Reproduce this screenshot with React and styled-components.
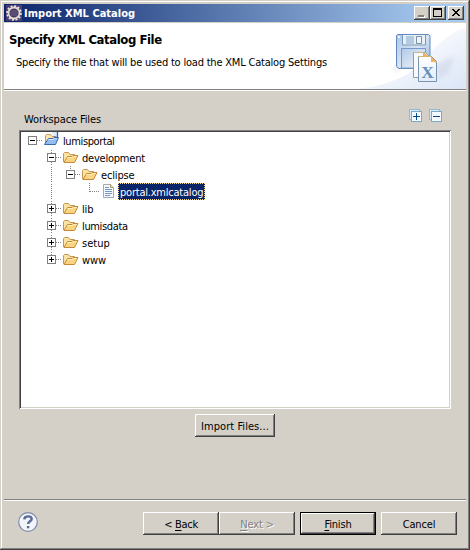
import React from "react";
import styled, { createGlobalStyle, css } from "styled-components";

const face = "#d4d0c8";

const GlobalStyle = createGlobalStyle`
  * { box-sizing: border-box; }
  body { margin: 0; background: ${face}; overflow: hidden; }
`;

const Window = styled.div`
  width: 470px;
  height: 550px;
  display: flex;
  flex-direction: column;
  padding: 4px;
  background: ${face};
  box-shadow: inset -1px -1px #404040, inset 1px 1px ${face}, inset -2px -2px #808080, inset 2px 2px #fff;
  font: 11px/17px "DejaVu Sans Condensed", "DejaVu Sans", sans-serif;
  font-stretch: condensed;
  color: #000;
`;

const TitleBar = styled.header`
  flex: none;
  height: 18px;
  display: flex;
  align-items: center;
  padding: 0 2px;
  background: linear-gradient(90deg, #0a246a, #a6caf0 94%);
`;

const Title = styled.span`
  flex: 1;
  margin-left: 2px;
  color: #fff;
  font-weight: bold;
  letter-spacing: 0.02px;
`;

const bevel = css`
  background: ${face};
  box-shadow: inset -1px -1px #404040, inset 1px 1px #fff, inset -2px -2px #808080;
`;

const CaptionButton = styled.button`
  ${bevel}
  width: 16px;
  height: 14px;
  padding: 0;
  border: 0;
  display: block;
  margin-left: ${(p) => (p.$gap ? "2px" : 0)};
  svg { display: block; }
`;

const Banner = styled.section`
  flex: none;
  height: 67px;
  margin-top: 1px;
  display: flex;
  justify-content: space-between;
  background: #fff;
  border-bottom: 1px solid #808080;
  box-shadow: 0 1px #fff;
`;

const BannerText = styled.div`
  padding: 7px 0 0 5px;
  white-space: nowrap;
`;

const Heading = styled.h1`
  margin: 0;
  font-size: 13px;
  line-height: 20px;
  font-weight: bold;
  letter-spacing: -0.43px;
`;

const Description = styled.p`
  margin: 4px 0 0 7px;
  line-height: 17px;
  letter-spacing: -0.2px;
`;

const BannerArt = styled.svg`
  display: block;
  width: 110px;
  height: 66px;
`;

const Content = styled.main`
  flex: 1;
  display: flex;
  flex-direction: column;
  padding: 17px 15px 0;
`;

const TreeHeader = styled.div`
  height: 23px;
  display: flex;
  justify-content: space-between;
  padding: 0 9px 0 5px;
`;

const TreeLabel = styled.label`
  margin-top: 4px;
  letter-spacing: -0.12px;
`;

const ToolIcons = styled.div`
  display: flex;
  gap: 7px;
  padding-top: 2px;
`;

const Tree = styled.div`
  height: 279px;
  padding: 2px;
  background: #fff;
  box-shadow: inset 1px 1px #808080, inset -1px -1px #fff, inset 2px 2px #404040, inset -2px -2px ${face};
`;

const Row = styled.div`
  display: flex;
  height: 17px;
  padding-left: 2px;
  svg { display: block; flex: none; }
`;

const RowText = styled.span`
  height: 17px;
  line-height: 19px;
  margin-left: 1px;
  padding: 0 2px;
  white-space: nowrap;
  letter-spacing: ${(p) => p.$track ?? -0.15}px;
  ${(p) =>
    p.$selected &&
    css`
      color: #fff;
      background: #0a246a;
      outline: 1px dotted #f5db95;
      outline-offset: -1px;
    `}
`;

const Button = styled.button`
  ${bevel}
  width: ${(p) => p.$width ?? 76}px;
  height: 23px;
  padding: 1px 0 0;
  border: 0;
  font: inherit;
  color: #000;
  white-space: nowrap;
  letter-spacing: ${(p) => p.$track ?? -0.15}px;
  ${(p) =>
    p.$primary &&
    css`
      box-shadow: inset 0 0 0 1px #000, inset -2px -2px #404040, inset 2px 2px #fff, inset -3px -3px #808080;
    `}
  &:disabled {
    color: #808080;
    text-shadow: 1px 1px #fff;
  }
`;

const Mnemonic = styled.span`
  text-decoration: underline;
  text-underline-offset: 2px;
  text-decoration-thickness: 1px;
  text-decoration-skip-ink: none;
`;

const ImportRow = styled.div`
  display: flex;
  padding: 5px 0 0 176px;
`;

const Footer = styled.footer`
  flex: none;
  height: 47px;
  display: flex;
  align-items: flex-start;
  padding: 12px 9px 0 14px;
  border-top: 1px solid #808080;
  box-shadow: inset 0 1px #fff;
`;

const Buttons = styled.div`
  display: flex;
  margin-left: auto;
  gap: 5px;
`;

const NavPair = styled.div`
  display: flex;
`;

function EclipseIcon() {
  return (
    <svg width="16" height="16" viewBox="0 0 16 16">
      <rect width="16" height="16" fill="#4d3d75" />
      <circle cx="8" cy="8" r="6.900" fill="none" stroke="#e8e4dc" strokeWidth="1.800" strokeDasharray="2 1.600" />
      <circle cx="8" cy="8" r="5.500" fill="#45365f" stroke="#dedad3" strokeWidth="1.800" />
      <path d="M4 8h8M5 6h6M5 10h6" stroke="#73678f" strokeWidth=".9" />
    </svg>
  );
}

function SaveCatalogArt() {
  return (
    <BannerArt viewBox="356 23 110 66">
      <defs>
        <linearGradient id="sweep" x1="0" y1="0" x2="1" y2="1">
          <stop offset=".25" stopColor="#fff" />
          <stop offset="1" stopColor="#dbe5f7" />
        </linearGradient>
        <linearGradient id="disk" x1="0" y1="0" x2="1" y2="1">
          <stop offset="0" stopColor="#a9c6e6" />
          <stop offset=".5" stopColor="#d5e5f5" />
          <stop offset="1" stopColor="#92add8" />
        </linearGradient>
        <linearGradient id="label" x1="0" y1="0" x2="1" y2="1">
          <stop offset="0" stopColor="#b2c9e7" />
          <stop offset="1" stopColor="#f4f8fd" />
        </linearGradient>
        <linearGradient id="sheet" x1="0" y1="0" x2="0" y2="1">
          <stop offset="0" stopColor="#fff" />
          <stop offset="1" stopColor="#e2ebf7" />
        </linearGradient>
        <filter id="soft"><feGaussianBlur stdDeviation="2" /></filter>
      </defs>
      <path d="M356 89Q405 84 426 58T466 28V89Z" fill="url(#sweep)" />
      <path d="M436 65l18-9-5 17-12 8ZM391 70l8-5v6Z" fill="#cbd0e5" opacity=".5" filter="url(#soft)" />
      <path d="M397.500 34.500h31l1.500 1.500v32.500H399l-2.500-2V35.500Z" fill="url(#disk)" stroke="#6388bd" />
      <path d="M402.500 35v10h23V35" fill="#e7eff7" stroke="#7b9abb" />
      <path d="M406 36h8v8h-8z" fill="#b4cae0" />
      <path d="M416.500 36.500h5v7h-5z" fill="#f1f5fa" stroke="#7992a3" />
      <path d="M401.500 68V48.500h24V68Z" fill="url(#label)" stroke="#7798c8" />
      <path d="M398 36h2v2h-2z" fill="#eef5fb" />
      <path d="M413.500 52.500h12l5 5v20h-17Z" fill="#f8faff" stroke="#8ba591" />
      <path d="M418.500 56.500h13l5 5v20h-18Z" fill="url(#sheet)" stroke="#7893ae" />
      <path d="M413 52.500h10l5 4M418 56.500h13" stroke="#c5b98c" fill="none" />
      <path d="M423 52l6 5h-6ZM431 56l6 7q-5-2-6-1Z" fill="#f5ad53" />
      <text x="427.500" y="77.500" textAnchor="middle" fontFamily="Liberation Serif, serif" fontWeight="bold" fontSize="17.500" fill="#658fbd">X</text>
    </BannerArt>
  );
}

function TreeToolIcon({ plus }) {
  return (
    <svg width="13" height="13" viewBox="0 0 13 13" shapeRendering="crispEdges">
      <path d="M.5.5h10v10H.5z" fill="#dcebf4" stroke="#91bad3" />
      <path d="M2.500 2.500h10v10h-10z" fill="#f4faff" stroke="#79a9c9" />
      <path d={plus ? "M4 7.500h7M7.500 4v7" : "M4 7.500h7"} stroke="#074a8c" />
    </svg>
  );
}

function Gutter({ depth, state, last, root }) {
  const x = depth * 19 + 9.5;
  return (
    <svg width={21 + depth * 19} height="17" shapeRendering="crispEdges">
      <g stroke="#808080" strokeDasharray="1 1" fill="none">
        {depth > 1 && <path d="M28.500 1v16" />}
        {!root && <path d={`M${x} ${depth === 1 ? 1 : 0}V${last ? 9 : 17}`} />}
        <path d={`M${x} 8.500H${depth * 19 + 20}`} />
      </g>
      {state && (
        <g>
          <rect x={x - 4} y="4.500" width="8" height="8" fill="#fff" stroke="#808080" />
          <path d={`M${x - 2.500} 8.500h5${state === "closed" ? `M${x} 6v5` : ""}`} stroke="#000" />
        </g>
      )}
    </svg>
  );
}

function FolderIcon() {
  return (
    <svg width="16" height="17" viewBox="0 0 16 17">
      <path d="M.5 13V4.500l1-1h4l1.500 2h4.500v3" fill="#fae3a4" stroke="#c99550" />
      <path d="M1 13.500l3.500-6H9l1-1h5l-3.500 7Z" fill="#fbd482" stroke="#c28a3a" strokeLinejoin="round" />
      <path d="M4.500 8.500h5l1-1h3" stroke="#fff0bd" fill="none" />
    </svg>
  );
}

function ProjectIcon() {
  return (
    <svg width="16" height="17" viewBox="0 0 16 17">
      <path d="M1.500 11.500v-8l1-1h4l1.500 2h3.500v4" fill="#fbe5aa" stroke="#c29b54" />
      <path d="M.5 12.500l4-6H9l1-1h4.500l-3 7Z" fill="#94bdf0" stroke="#3869b2" strokeLinejoin="round" />
      <path d="M4.500 7.500h5l1-1h2.500" stroke="#d8eaff" fill="none" />
      <path d="M8 0h5v4H9z" fill="#dceafa" />
      <path d="M13.500 0v4q0 1.500-1.500 1.500t-1.500-1" stroke="#31629b" strokeWidth="1.300" fill="none" />
    </svg>
  );
}

function FileIcon() {
  return (
    <svg width="16" height="17" viewBox="0 0 16 17">
      <path d="M2.500 1.500h7l3 3v10h-10Z" fill="#f5f9ff" stroke="#a3abb2" />
      <path d="M9.500 1.500v3h3" fill="#efd597" stroke="#b89c61" />
      <path d="M4 4.500h4M4 6.500h7M4 8.500h7M4 10.500h7M4 12.500h5" stroke="#7598cb" />
    </svg>
  );
}

const icons = { project: ProjectIcon, folder: FolderIcon, file: FileIcon };

const nodes = [
  { name: "lumisportal", depth: 0, state: "open", icon: "project", root: true, track: -0.38 },
  { name: "development", depth: 1, state: "open", icon: "folder", track: -0.22 },
  { name: "eclipse", depth: 2, state: "open", icon: "folder", last: true },
  { name: "portal.xmlcatalog", depth: 3, icon: "file", last: true, selected: true, track: -0.22 },
  { name: "lib", depth: 1, state: "closed", icon: "folder" },
  { name: "lumisdata", depth: 1, state: "closed", icon: "folder", track: -0.36 },
  { name: "setup", depth: 1, state: "closed", icon: "folder", track: 0 },
  { name: "www", depth: 1, state: "closed", icon: "folder", last: true },
];

function TreeNode({ node }) {
  const Icon = icons[node.icon];
  return (
    <Row>
      <Gutter {...node} />
      <Icon />
      <RowText $selected={node.selected} $track={node.track}>{node.name}</RowText>
    </Row>
  );
}

function HelpIcon() {
  return (
    <svg width="20" height="20" viewBox="0 0 20 20">
      <circle cx="10" cy="10" r="9.300" fill="#f2f4f8" stroke="#7c8ba6" strokeWidth="1.200" />
      <path d="M6.300 7.400Q6.500 4.400 10.200 4.400q3.500 0 3.500 2.600c0 2.400-3.600 2.200-3.600 5" stroke="#566b96" strokeWidth="2.400" fill="none" />
      <path d="M8.900 14h2.400v2.300H8.900z" fill="#566b96" />
    </svg>
  );
}

export default function App() {
  return (
    <>
      <GlobalStyle />
      <Window>
        <TitleBar>
          <EclipseIcon />
          <Title>Import XML Catalog</Title>
          <CaptionButton aria-label="Minimize">
            <svg width="16" height="14"><path d="M5 10h6v2H5z" fill="#fff" /><path d="M4 9h6v2H4z" fill="#808080" /></svg>
          </CaptionButton>
          <CaptionButton aria-label="Maximize">
            <svg width="16" height="14" shapeRendering="crispEdges"><path d="M3.500 3v7.500h8V3M3 3h9" fill="none" stroke="#000" /><path d="M3 2h9v2H3z" /></svg>
          </CaptionButton>
          <CaptionButton aria-label="Close" $gap>
            <svg width="16" height="14" shapeRendering="crispEdges"><path d="M4 3h2v1h1v1h2V4h1V3h2v1h-1v1h-1v1H9v1h1v1h1v1h1v1h-2V9H9V8H7v1H6v1H4V9h1V8h1V7h1V6H6V5H5V4H4z" /></svg>
          </CaptionButton>
        </TitleBar>
        <Banner>
          <BannerText>
            <Heading>Specify XML Catalog File</Heading>
            <Description>Specify the file that will be used to load the XML Catalog Settings</Description>
          </BannerText>
          <SaveCatalogArt />
        </Banner>
        <Content>
          <TreeHeader>
            <TreeLabel>Workspace Files</TreeLabel>
            <ToolIcons>
              <TreeToolIcon plus />
              <TreeToolIcon />
            </ToolIcons>
          </TreeHeader>
          <Tree>
            {nodes.map((node) => <TreeNode key={node.name} node={node} />)}
          </Tree>
          <ImportRow>
            <Button $width={80} $track={0.05}>Import Files...</Button>
          </ImportRow>
        </Content>
        <Footer>
          <HelpIcon />
          <Buttons>
            <NavPair>
              <Button $track={-0.3}>&lt; <Mnemonic>B</Mnemonic>ack</Button>
              <Button disabled><Mnemonic>N</Mnemonic>ext &gt;</Button>
            </NavPair>
            <Button $primary><Mnemonic>F</Mnemonic>inish</Button>
            <Button>Cancel</Button>
          </Buttons>
        </Footer>
      </Window>
    </>
  );
}
